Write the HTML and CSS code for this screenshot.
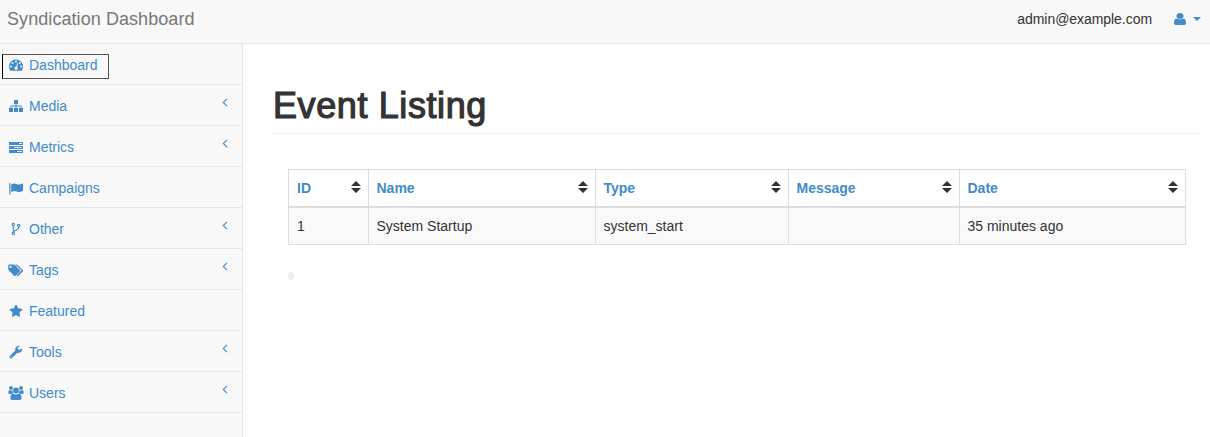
FILE: index.html
```html
<!DOCTYPE html>
<html lang="en">
<head>
<meta charset="utf-8">
<title>Syndication Dashboard</title>
<link rel="stylesheet" href="styles.css">
</head>
<body>
<header class="navbar">
  <a class="brand">Syndication Dashboard</a>
  <div class="account">
    <span class="email">admin@example.com</span>
    <svg class="user" viewBox="256 128 1280 1536" preserveAspectRatio="none"><path d="M1536 1399q0 109-62.5 187t-150.5 78h-854q-88 0-150.5-78t-62.5-187q0-85 8.5-160.5t31.5-152 58.5-131 94-89 134.5-34.5q131 128 313 128t313-128q76 0 134.5 34.5t94 89 58.5 131 31.5 152 8.5 160.5zm-256-887q0 159-112.5 271.5t-271.5 112.5-271.5-112.5-112.5-271.5 112.5-271.5 271.5-112.5 271.5 112.5 112.5 271.5z"/></svg>
    <svg class="caret" viewBox="0 0 8 4"><path d="M0 0h8L4 4z"/></svg>
  </div>
</header>
<div class="shell">
  <nav class="sidebar">
    <a class="item focused"><svg class="icon" viewBox="0 0 16 14"><path fill-rule="evenodd" d="M1 8.5a7 7 0 0 1 14 0q0 2-1.1 3.9-.2.4-.6.4H2.700q-.4 0-.6-.4Q1 10.500 1 8.500zM3 7.500a1 1 0 1 0 0 2 1 1 0 0 0 0-2zM4.500 4a1 1 0 1 0 0 2 1 1 0 0 0 0-2zM8 2.500a1 1 0 1 0 0 2 1 1 0 0 0 0-2zM11.700 4a1 1 0 1 0 0 2 1 1 0 0 0 0-2zM13 7.500a1 1 0 1 0 0 2 1 1 0 0 0 0-2zM9.100 5.300 8.200 8.600a1.600 1.600 0 1 0 .9.300L10 5.500z"/></svg><span>Dashboard</span></a>
    <a class="item"><svg class="icon" viewBox="0 0 16 14"><path d="M6 1h4v4H8.500v1.500H13q.6 0 .6.600V9H15v4h-4V9h1.600V7.500H8.500V9H10v4H6V9h1.500V7.500H3.400V9H5v4H1V9h1.400V7.100q0-.6.600-.6h4.500V5H6z"/></svg><span>Media</span><svg class="chev" viewBox="0 0 6 9"><path d="M5 .8 1.300 4.500 5 8.200"/></svg></a>
    <a class="item"><svg class="icon" viewBox="0 0 16 14"><path fill-rule="evenodd" d="M1 2h14v3H1zM11 3v1h3V3zM1 6h14v3H1zM6 7v1h8V7zM1 10h14v3H1zM9 11v1h5v-1z"/></svg><span>Metrics</span><svg class="chev" viewBox="0 0 6 9"><path d="M5 .8 1.300 4.500 5 8.200"/></svg></a>
    <a class="item"><svg class="icon" viewBox="0 0 16 14"><path d="M1.300 2h1.200v11.500H1.300zM3.200 3.500q2.800-1.700 5.300-.5 2.500 1.300 6.500-.7v7.500q-3.700 2-6.200.7-2.300-1.200-5.600.6z"/></svg><span>Campaigns</span></a>
    <a class="item"><svg class="icon branch" viewBox="0 0 16 14"><path d="M5.300 4v6.500M10.700 4.800q0 2.200-2.300 3.100-3.100 1-3.100 2.600"/><circle cx="5.300" cy="2.600" r="1.200"/><circle cx="5.300" cy="11.600" r="1.200"/><circle cx="10.700" cy="3.600" r="1.200"/></svg><span>Other</span><svg class="chev" viewBox="0 0 6 9"><path d="M5 .8 1.300 4.500 5 8.200"/></svg></a>
    <a class="item"><svg class="icon" viewBox="0 0 16 14"><path fill-rule="evenodd" d="M.3 2.500q0-1 1-1h4q.8 0 1.500.6l5 5q.7.8 0 1.500l-4.200 4.200q-.8.700-1.500 0L.9 7.600Q.3 7 .3 6zM2.600 2.700a1.100 1.100 0 1 0 0 2.200 1.100 1.100 0 0 0 0-2.200zM7.100 1.500h1q.8 0 1.500.6l5.100 5q.8.800 0 1.500l-4.200 4.200q-.8.800-1.600 0l-.3-.3 4.300-4.400q.7-.6 0-1.300z"/></svg><span>Tags</span><svg class="chev" viewBox="0 0 6 9"><path d="M5 .8 1.300 4.500 5 8.200"/></svg></a>
    <a class="item"><svg class="icon" viewBox="0 -28 2048 1792"><path transform="translate(128 0)" d="M1728 647q0 22-26 48l-363 354 86 500q1 7 1 20 0 21-10.500 35.500t-30.500 14.500q-19 0-40-12l-449-236-449 236q-22 12-40 12-21 0-31.500-14.500t-10.500-35.500q0-6 2-20l86-500-364-354q-25-27-25-48 0-37 56-46l502-73 225-455q19-41 49-41t49 41l225 455 502 73q56 9 56 46z"/></svg><span>Featured</span></a>
    <a class="item"><svg class="icon" viewBox="0 0 16 14"><path fill-rule="evenodd" d="M13.700 3.500 11.300 4.900l-1.500-.9V2.500L12.200 1Q10.500.5 8.800 1.500 6.500 3.200 7.300 5.600L1.800 11q-.9.900-.1 1.700l.6.600q.8.700 1.600 0l5.400-5.500q2.200.6 3.900-1Q14.500 5.400 14.100 3.400zM3.200 11.200a.6.600 0 1 1 0 1.200.6.600 0 0 1 0-1.200z"/></svg><span>Tools</span><svg class="chev" viewBox="0 0 6 9"><path d="M5 .8 1.300 4.500 5 8.200"/></svg></a>
    <a class="item"><svg class="icon" viewBox="0 0 16 14"><circle cx="3" cy="2" r="1.900"/><circle cx="13" cy="2" r="1.900"/><circle cx="8" cy="4.500" r="2.900"/><path d="M.3 7Q.3 4 1.500 4q1.500 1 3 .3Q4.500 6 5.300 7q-1.300.1-2 1H2Q.3 8 .3 7zM15.700 7q0-3-1.200-3-1.500 1-3 .3 0 1.700-.8 2.700 1.300.1 2 1H14q1.700 0 1.700-1zM5.200 7.500Q8 9.300 10.800 7.500q2.800 0 2.800 4.500 0 2-1.900 2H4.300q-1.900 0-1.900-2 0-4.500 2.800-4.500z"/></svg><span>Users</span><svg class="chev" viewBox="0 0 6 9"><path d="M5 .8 1.300 4.500 5 8.200"/></svg></a>
  </nav>
  <main class="content">
    <h1 class="title">Event Listing</h1>
    <table class="events">
      <colgroup><col class="c-id"><col class="c-name"><col class="c-type"><col class="c-message"><col class="c-date"></colgroup>
      <thead><tr>
        <th><div class="head"><a>ID</a><svg class="sort" viewBox="0 0 10 12"><path d="M5 0 10 5H0zM0 7h10L5 12z"/></svg></div></th>
        <th><div class="head"><a>Name</a><svg class="sort" viewBox="0 0 10 12"><path d="M5 0 10 5H0zM0 7h10L5 12z"/></svg></div></th>
        <th><div class="head"><a>Type</a><svg class="sort" viewBox="0 0 10 12"><path d="M5 0 10 5H0zM0 7h10L5 12z"/></svg></div></th>
        <th><div class="head"><a>Message</a><svg class="sort" viewBox="0 0 10 12"><path d="M5 0 10 5H0zM0 7h10L5 12z"/></svg></div></th>
        <th><div class="head"><a>Date</a><svg class="sort" viewBox="0 0 10 12"><path d="M5 0 10 5H0zM0 7h10L5 12z"/></svg></div></th>
      </tr></thead>
      <tbody><tr>
        <td>1</td><td>System Startup</td><td>system_start</td><td></td><td>35 minutes ago</td>
      </tr></tbody>
    </table>
    <div class="pager"></div>
  </main>
</div>
</body>
</html>
```
FILE: styles.css
```css
*, *::after { box-sizing: border-box; }
body {
  margin: 0;
  height: 437px;
  overflow: hidden;
  display: flex;
  flex-direction: column;
  background: #fff;
  color: #333;
  font: 14px/20px "Liberation Sans", Arial, sans-serif;
}
svg { display: block; flex: none; fill: currentColor; }

.navbar {
  flex: none;
  height: 44px;
  display: flex;
  justify-content: space-between;
  padding: 9px 9px 0 7px;
  background: #f8f8f8;
  border-bottom: 1px solid #e7e7e7;
}
.brand { font-size: 18px; color: #777; letter-spacing: 0.07px; }
.account { display: flex; color: #428bca; }
.email { color: #333; letter-spacing: -0.05px; }
.user { width: 12px; height: 12px; margin: 4px 0 0 22px; }
.caret { width: 8px; height: 4px; margin: 8px 0 0 7px; }

.shell { flex: 1; display: flex; min-height: 0; }
.sidebar {
  flex: none;
  width: 243px;
  background: #f8f8f8;
  border-right: 1px solid #e7e7e7;
}
.item {
  position: relative;
  height: 41px;
  display: flex;
  align-items: flex-start;
  padding: 11px 14px 0 8px;
  border-bottom: 1px solid #e7e7e7;
  color: #428bca;
}
.focused::after {
  content: "";
  position: absolute;
  left: 2px;
  top: 10px;
  width: 107px;
  height: 25px;
  border: 1px solid #555;
  border-left-color: #000;
}
.icon { width: 16px; height: 14px; margin: 3px 5px 0 0; }
.branch { fill: none; stroke: currentColor; stroke-width: 1.1; }
.chev {
  width: 6px;
  height: 9px;
  margin: 2px 0 0 auto;
  fill: none;
  stroke: currentColor;
  stroke-width: 1.1;
}

.content { flex: 1; padding: 40px 10px 0 30px; }
.title {
  margin: 0 0 35px;
  height: 50px;
  border-bottom: 1px solid #eee;
  font-size: 36px;
  line-height: 44px;
  font-weight: 400;
  letter-spacing: 0.6px;
  -webkit-text-stroke: 1.2px #333;
}
.events {
  width: 898px;
  margin-left: 15px;
  table-layout: fixed;
  border-collapse: collapse;
}
.c-id { width: 80px; }
.c-name { width: 227px; }
.c-type { width: 193px; }
.c-message { width: 171px; }
.c-date { width: 226px; }
th, td { border: 1px solid #ddd; padding: 8px 7.5px 8px 7.5px; text-align: left; }
th { height: 38px; padding-bottom: 7.5px; border-bottom-width: 2px; line-height: 20px; }
th { height: 37px; padding-bottom: 7px; }
td { height: 37px; background: #f9f9f9; }
th:first-child, td:first-child { padding-left: 8px; }
.head { display: flex; justify-content: space-between; color: #428bca; }
.sort { width: 10px; height: 12px; margin-top: 3px; color: #333; }
.pager { width: 6px; height: 8px; margin: 27px 0 0 15px; border-radius: 3px; background: #eee; }
```
